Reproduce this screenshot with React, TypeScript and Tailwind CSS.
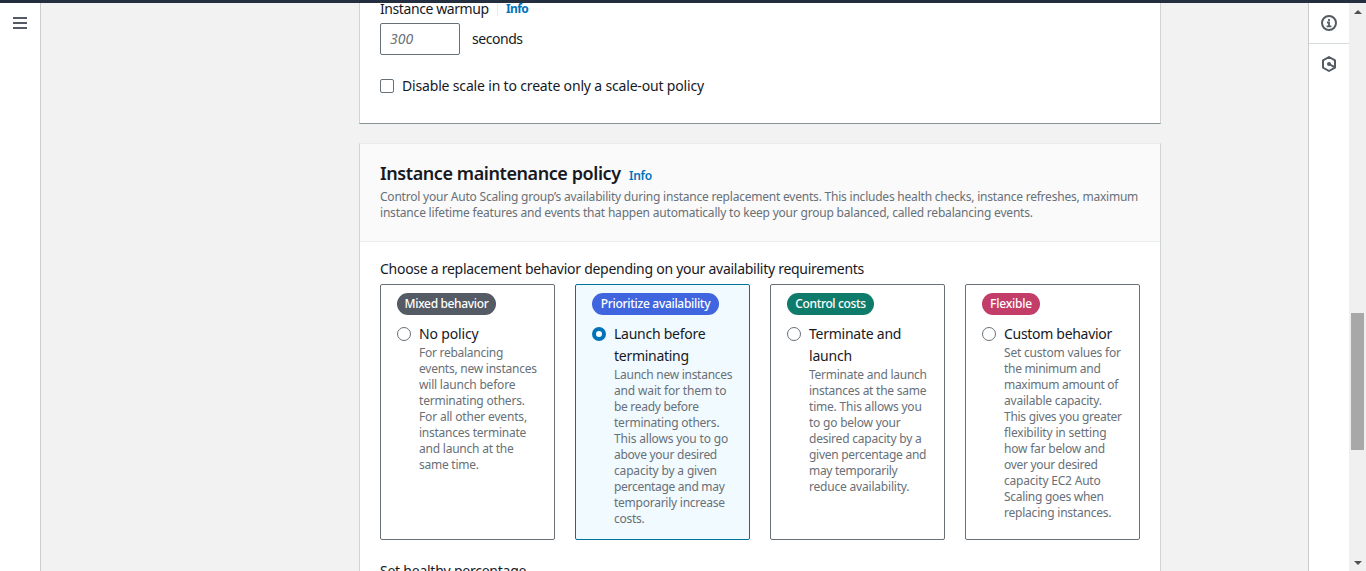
import React from "react";

type Line = [text: string, tracking: string];

type Option = {
  badge: string;
  badgeClass: string;
  title: Line[];
  description: Line[];
  selected?: boolean;
};

const options: Option[] = [
  {
    badge: "Mixed behavior",
    badgeClass: "w-[99px] bg-[#545b64] tracking-[-0.35px]",
    title: [["No policy", "tracking-[-0.15px]"]],
    description: [
      ["For rebalancing", "tracking-[-0.27px]"],
      ["events, new instances", "tracking-[-0.24px]"],
      ["will launch before", "tracking-[-0.2px]"],
      ["terminating others.", "tracking-[-0.2px]"],
      ["For all other events,", "tracking-[-0.17px]"],
      ["instances terminate", "tracking-[-0.25px]"],
      ["and launch at the", "tracking-[-0.22px]"],
      ["same time.", "tracking-[-0.25px]"],
    ],
  },
  {
    badge: "Prioritize availability",
    badgeClass: "w-[127px] bg-[#4066df] tracking-[-0.3px]",
    selected: true,
    title: [["Launch before", "tracking-[-0.25px]"], ["terminating", "tracking-[-0.28px]"]],
    description: [
      ["Launch new instances", "tracking-[-0.27px]"],
      ["and wait for them to", "tracking-[-0.15px]"],
      ["be ready before", "tracking-[-0.3px]"],
      ["terminating others.", "tracking-[-0.22px]"],
      ["This allows you to go", "tracking-[-0.17px]"],
      ["above your desired", "tracking-[-0.27px]"],
      ["capacity by a given", "tracking-[-0.17px]"],
      ["percentage and may", "tracking-[-0.3px]"],
      ["temporarily increase", "tracking-[-0.25px]"],
      ["costs.", "tracking-[-0.25px]"],
    ],
  },
  {
    badge: "Control costs",
    badgeClass: "w-[87px] bg-[#0f7c6b] tracking-[-0.35px]",
    title: [["Terminate and", "tracking-[-0.25px]"], ["launch", "tracking-[-0.2px]"]],
    description: [
      ["Terminate and launch", "tracking-[-0.25px]"],
      ["instances at the same", "tracking-[-0.25px]"],
      ["time. This allows you", "tracking-[-0.2px]"],
      ["to go below your", "tracking-[-0.22px]"],
      ["desired capacity by a", "tracking-[-0.22px]"],
      ["given percentage and", "tracking-[-0.27px]"],
      ["may temporarily", "tracking-[-0.3px]"],
      ["reduce availability.", "tracking-[-0.2px]"],
    ],
  },
  {
    badge: "Flexible",
    badgeClass: "w-[58px] bg-[#c33d69] tracking-[-0.2px]",
    title: [["Custom behavior", "tracking-[-0.3px]"]],
    description: [
      ["Set custom values for", "tracking-[-0.2px]"],
      ["the minimum and", "tracking-[-0.3px]"],
      ["maximum amount of", "tracking-[-0.3px]"],
      ["available capacity.", "tracking-[-0.2px]"],
      ["This gives you greater", "tracking-[-0.28px]"],
      ["flexibility in setting", "tracking-[-0.17px]"],
      ["how far below and", "tracking-[-0.2px]"],
      ["over your desired", "tracking-[-0.3px]"],
      ["capacity EC2 Auto", "tracking-[-0.2px]"],
      ["Scaling goes when", "tracking-[-0.28px]"],
      ["replacing instances.", "tracking-[-0.22px]"],
    ],
  },
];

function Lines({ lines }: { lines: Line[] }) {
  return (
    <>
      {lines.map(([text, tracking]) => (
        <span key={text} className={`block whitespace-nowrap ${tracking}`}>
          {text}
        </span>
      ))}
    </>
  );
}

function OptionTile({ option }: { option: Option }) {
  return (
    <label
      className={`flex h-[256px] w-[175px] flex-col rounded-[2px] border pl-4 pt-2 ${
        option.selected ? "border-[#0073a0] bg-[#f1faff]" : "border-[#687078] bg-white"
      }`}
    >
      <span
        className={`flex h-[22px] items-center justify-center whitespace-nowrap rounded-full text-[12px] font-medium text-white ${option.badgeClass}`}
      >
        {option.badge}
      </span>
      <span className="mt-2 flex">
        <span
          className={`mt-1 h-[14px] w-[14px] shrink-0 rounded-full bg-white ${
            option.selected ? "border-[4px] border-[#0073bb]" : "border border-[#687078]"
          }`}
        />
        <span className="ml-2 flex flex-col">
          <span className="text-[14px] leading-[22px] text-[#16191f]">
            <Lines lines={option.title} />
          </span>
          <span className="text-[12px] leading-[16px] text-[#687078]">
            <Lines lines={option.description} />
          </span>
        </span>
      </span>
    </label>
  );
}

function Sidebar() {
  return (
    <nav className="w-[41px] shrink-0 border-r border-[#c9cdcd] bg-white pl-[13px] pt-[14px]">
      <svg width="14" height="12" viewBox="0 0 14 12" fill="none" stroke="#545b64" strokeWidth="2">
        <path d="M0 1h14M0 6h14M0 11h14" />
      </svg>
    </nav>
  );
}

function ToolRail() {
  return (
    <aside className="flex w-[41px] shrink-0 flex-col border-l border-[#c9cdcd] bg-white">
      <div className="flex h-[41px] items-center justify-center border-b border-[#d5dbdb]">
        <svg width="16" height="16" viewBox="0 0 16 16" fill="none" stroke="#545b64" strokeWidth="2">
          <circle cx="8" cy="8" r="7" />
          <path d="M8 4v2M6 7.5h2V11M5.6 11.4h4.8" strokeWidth="1.8" />
        </svg>
      </div>
      <div className="flex h-[39px] items-center justify-center">
        <svg width="16" height="16" viewBox="0 0 16 16" fill="none" stroke="#545b64" strokeWidth="2" strokeLinejoin="round">
          <path d="M8 1l6 3.4v7.2L8 15l-6-3.4V4.4z" />
          <path d="M8 8l5.5 3.2" />
          <circle cx="8" cy="8" r="2" fill="#545b64" stroke="none" />
        </svg>
      </div>
    </aside>
  );
}

function Scrollbar() {
  return (
    <div className="flex w-[17px] shrink-0 flex-col items-center bg-[#f0f0f0]">
      <svg className="mt-[7px] shrink-0" width="8" height="4" viewBox="0 0 8 4" fill="#505050">
        <path d="M4 0l4 4H0z" />
      </svg>
      <div className="mt-[299px] h-[137px] w-[13px] shrink-0 bg-[#a8a8a8]" />
      <svg className="mt-[111px] shrink-0" width="8" height="4" viewBox="0 0 8 4" fill="#505050">
        <path d="M0 0h8L4 4z" />
      </svg>
    </div>
  );
}

export default function App() {
  return (
    <div className="flex h-[571px] w-[1366px] flex-col overflow-hidden bg-[#f2f2f2] font-['Noto_Sans','Open_Sans',sans-serif] text-[#16191f]">
      <div className="h-[3px] shrink-0 bg-[#232f3e]" />
      <div className="flex min-h-0 flex-1">
        <Sidebar />
        <main className="flex min-w-0 flex-1 flex-col gap-[19px] overflow-hidden pl-[318px]">
          <section className="h-[121px] w-[802px] shrink-0 border-x border-b border-x-[#d0d4d4] border-b-[#879596] bg-white pl-5">
            <div className="-mt-[6px] flex h-[22px] items-center">
              <span className="w-[109px] whitespace-nowrap text-[14px] tracking-[-0.42px]">Instance warmup</span>
              <span className="ml-2 mt-[2px] h-[14px] border-l border-[#eaeded]" />
              <a className="ml-2 mt-[2px] text-[12px] font-bold tracking-[-0.6px] text-[#0073bb]">Info</a>
            </div>
            <div className="mt-1 flex">
              <div className="h-8 w-20 rounded-[2px] border border-[#687078] pl-[9px] text-[14px] italic leading-[30px] text-[#687078]">
                300
              </div>
              <span className="ml-3 text-[14px] leading-[31px] tracking-[-0.45px]">seconds</span>
            </div>
            <div className="mt-5 flex h-[22px] items-center">
              <span className="h-[14px] w-[14px] rounded-[2px] border border-[#687078]" />
              <span className="ml-2 whitespace-nowrap text-[14px] leading-[20px] tracking-[-0.17px]">
                Disable scale in to create only a scale-out policy
              </span>
            </div>
          </section>
          <section className="h-[460px] w-[802px] shrink-0 border-x border-t border-x-[#d0d4d4] border-t-[#eaeded] bg-white">
            <header className="h-[98px] border-b border-[#eaeded] bg-[#fafafa] pl-5 pt-[18px]">
              <div className="flex h-[22px] items-baseline whitespace-nowrap leading-[22px]">
                <h2 className="w-[241px] text-[18px] font-semibold tracking-[-0.42px]">Instance maintenance policy</h2>
                <a className="ml-2 text-[12px] font-semibold tracking-[-0.3px] text-[#0073bb]">Info</a>
              </div>
              <p className="mt-[5px] text-[12px] leading-[16px] text-[#687078]">
                <Lines
                  lines={[
                    ["Control your Auto Scaling group’s availability during instance replacement events. This includes health checks, instance refreshes, maximum", "tracking-[-0.216px]"],
                    ["instance lifetime features and events that happen automatically to keep your group balanced, called rebalancing events.", "tracking-[-0.196px]"],
                  ]}
                />
              </p>
            </header>
            <div className="px-5 pt-4">
              <div className="whitespace-nowrap text-[14px] leading-[22px] tracking-[-0.27px]">
                Choose a replacement behavior depending on your availability requirements
              </div>
              <div className="mt-[4px] flex gap-5">
                {options.map((option) => (
                  <OptionTile key={option.badge} option={option} />
                ))}
              </div>
              <div className="mt-[20px] whitespace-nowrap text-[14px] leading-[22px] tracking-[-0.24px]">
                Set healthy percentage
              </div>
            </div>
          </section>
        </main>
        <ToolRail />
        <Scrollbar />
      </div>
    </div>
  );
}
